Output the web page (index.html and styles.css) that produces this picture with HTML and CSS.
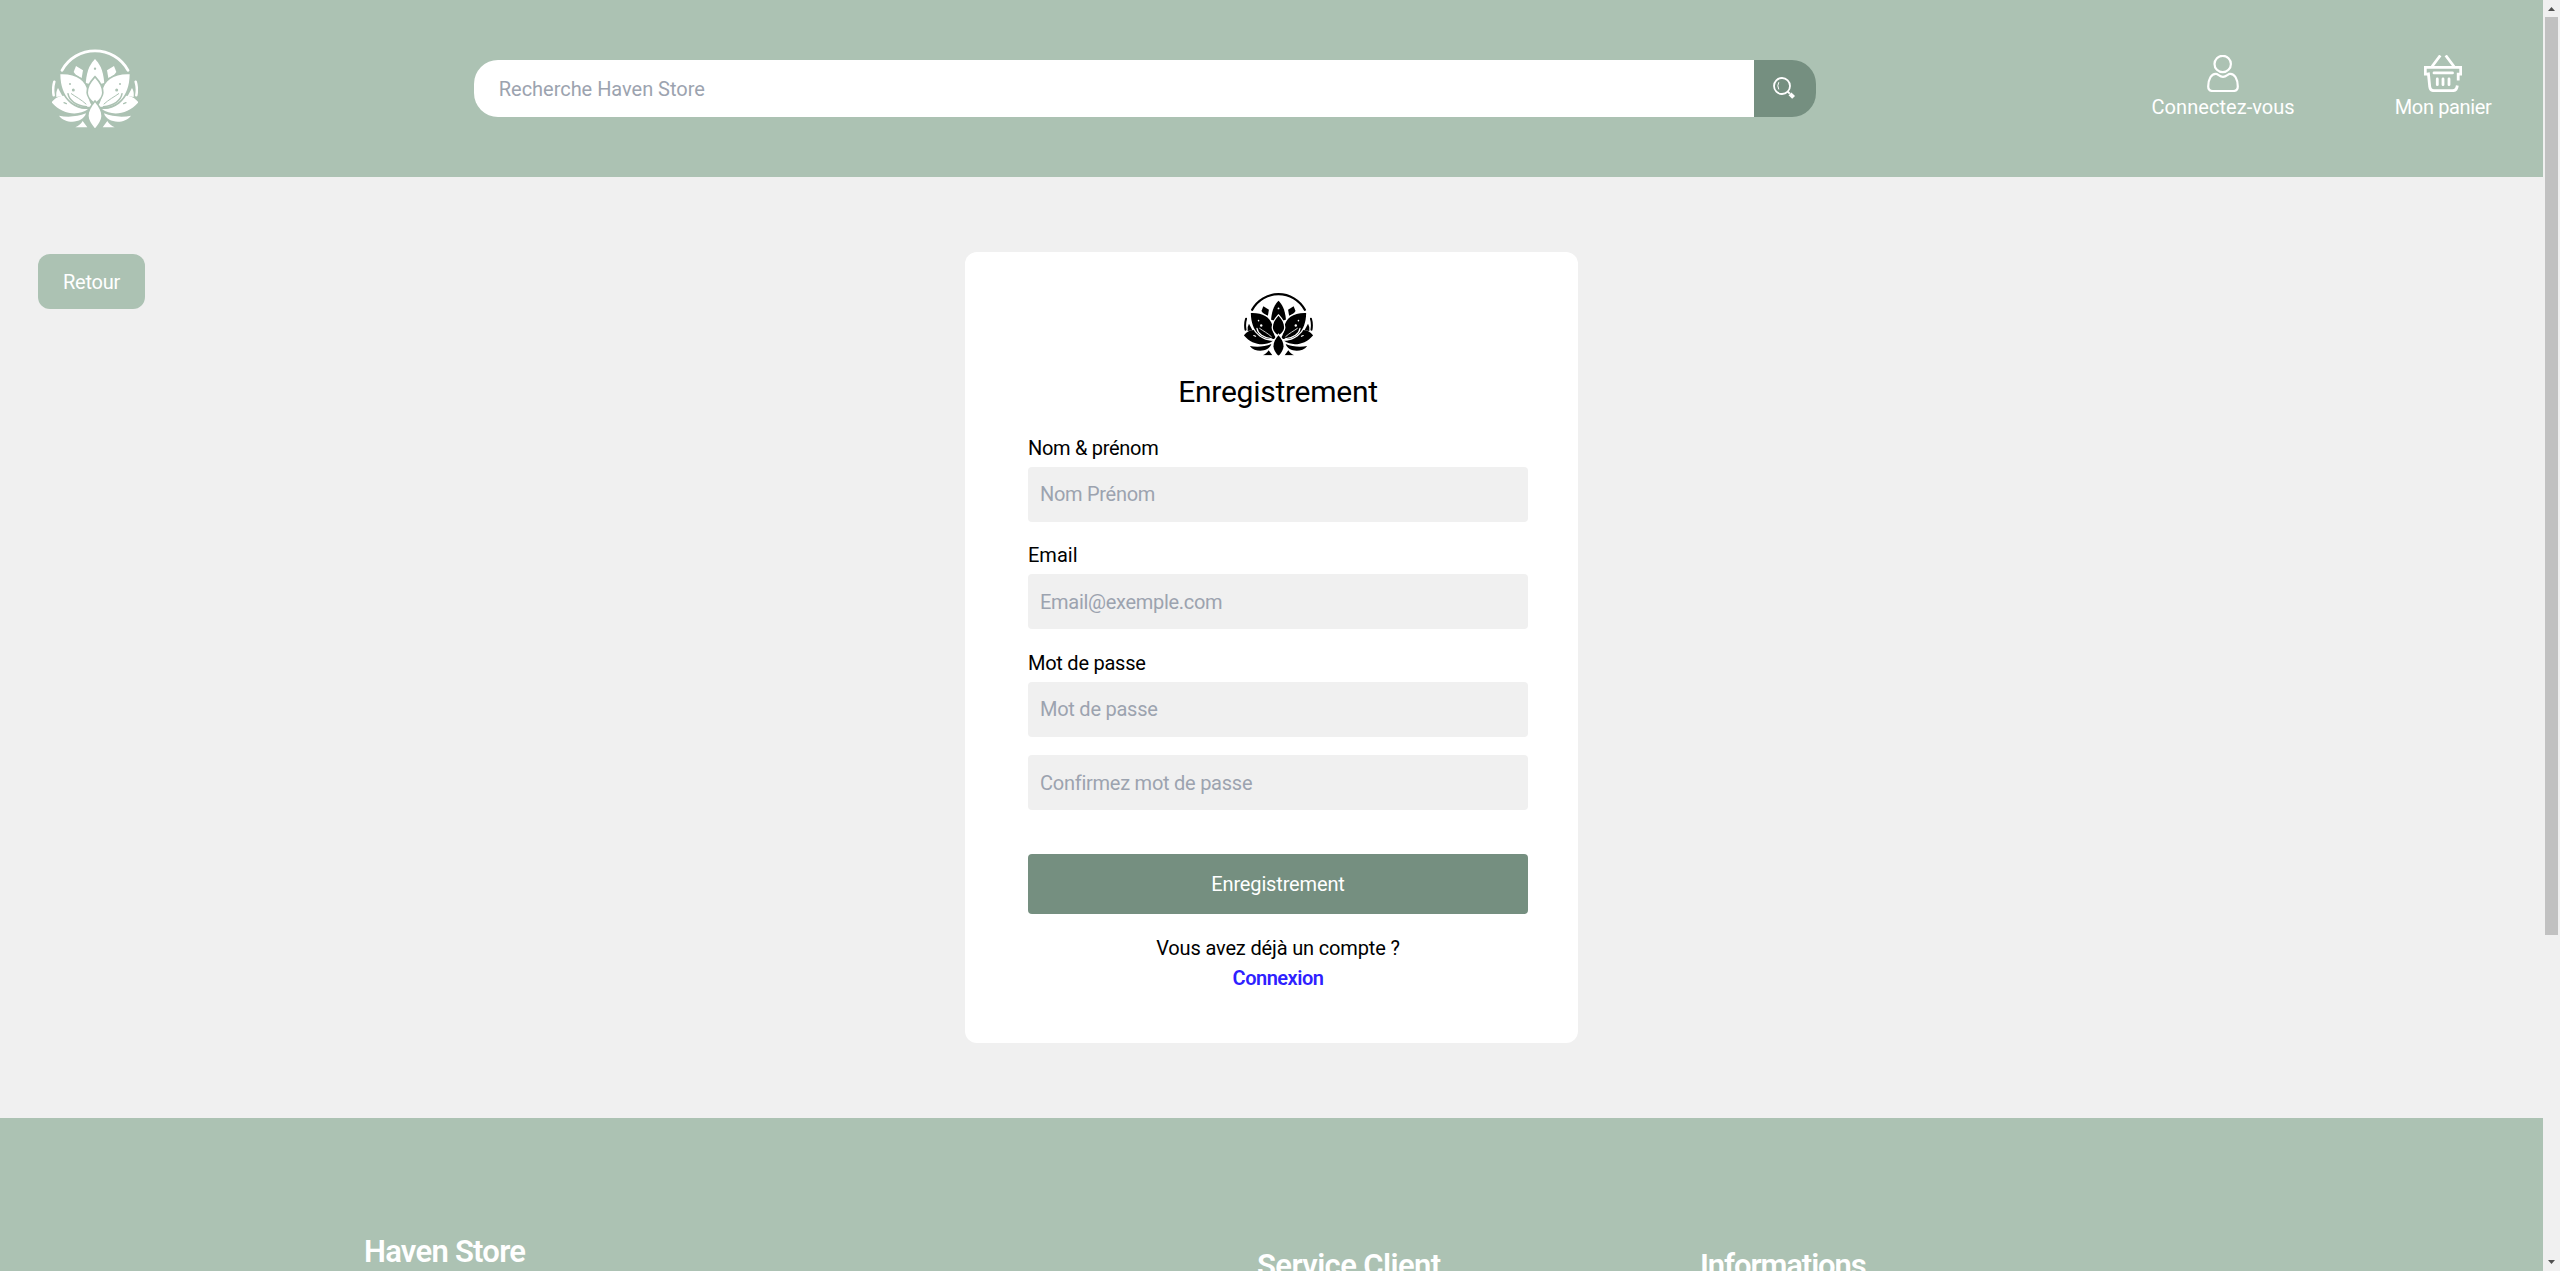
FILE: index.html
```html
<!DOCTYPE html>
<html lang="fr">
<head>
<meta charset="utf-8">
<title>Haven Store</title>
<link rel="stylesheet" href="styles.css">
</head>
<body>
<svg class="defs" width="0" height="0">
  <symbol id="lotus" viewBox="66 57 258 235">
    <path class="line" d="M96 120A113 113 0 0 1 294 120" stroke-width="8.500"/>
    <path d="M195 86C207 99 219 114 223 158L195 165L167 158C171 114 183 99 195 86Z"/>
    <g id="lotus-half">
      <path d="M138 107L159 120L155 143L140 137L131 125Z"/>
      <path class="line" d="M73 154Q67 174 71 195" stroke-width="7.500"/>
      <path d="M84 173L97 197L79 200Q77 184 84 173Z"/>
      <path d="M136 291C147 285 153 281 158 272L172 291Z"/>
      <path d="M87 256C110 261 142 260 168 249C160 278 108 284 87 256Z"/>
      <path d="M65 216C75 201 90 195 112 196C122 221 142 233 174 237C144 258 96 253 65 216Z"/>
      <path class="gap-edge" d="M91 132C138 130 168 150 173 185C174 202 178 216 187 228C150 238 92 218 91 132Z"/>
      <path class="gap-line" d="M114 190C117 210 138 226 170 229" stroke-width="4.500"/>
      <path class="gap-line" d="M124 190C138 200 154 208 168 221" stroke-width="3"/>
      <circle class="gap-fill" cx="130" cy="179" r="4.500"/>
      <circle class="gap-fill" cx="120" cy="161" r="3"/>
      <path class="gap-line" d="M102 217L109 220" stroke-width="4"/>
    </g>
    <use href="#lotus-half" transform="translate(390 0) scale(-1 1)"/>
    <circle class="gap-fill" cx="195" cy="115" r="3.500"/>
    <path class="gap-edge" d="M195 143C209 158 216 172 216 187C215 202 204 210 195 218C186 210 175 202 174 187C174 172 181 158 195 143Z"/>
    <path class="gap-edge" d="M195 216C207 230 214 244 214 257C214 270 205 282 195 294C185 282 176 270 176 257C176 244 183 230 195 216Z"/>
  </symbol>
</svg>
<div class="window">
  <div class="page">
    <header class="header">
      <svg class="logo"><use href="#lotus"/></svg>
      <form class="search">
        <input class="search-input" type="text" placeholder="Recherche Haven Store">
        <button class="search-button" type="button" aria-label="Rechercher">
          <svg width="22" height="22" viewBox="0 0 22 22" fill="none" stroke="#fff">
            <circle cx="9" cy="9" r="8" stroke-width="1.800"/>
            <path d="M5.800 5.200Q3.800 8.800 5.800 12.400" stroke-width="1"/>
            <path d="M14.800 14.600l2 2" stroke-width="2"/>
            <path d="M17 16.800l3.600 3.600" stroke-width="4"/>
          </svg>
        </button>
      </form>
      <nav class="nav">
        <a class="nav-link">
          <svg width="32" height="37" viewBox="0 0 32 37" fill="none" stroke="#fff" stroke-width="2.200">
            <circle cx="15.700" cy="9" r="8.200"/>
            <path d="M9 18.800C4.500 18.500 1.200 24 1.200 31.500Q1.200 36 5.800 36H26.200Q30.800 36 30.800 31.500C30.800 24 27.500 18.500 23 18.800Q21.500 19 20.300 20.200Q16 23.500 11.700 20.200Q10.500 19 9 18.800Z"/>
          </svg>
          <span>Connectez-vous</span>
        </a>
        <a class="nav-link nav-cart">
          <svg width="38" height="37" viewBox="0 0 38 37" fill="none" stroke="#fff" stroke-width="2.800">
            <path d="M1.300 19.200V12.300H36.700V19.200H34.200V25.500M4.300 17.500L5.700 31.500Q6.200 35.700 10 35.700H28.500Q32.800 35.700 33.300 30.500M0 19.200H5"/>
            <path d="M10 17.900H28.500M13.300 24V29.700M19 24V29.700M25 24V29.700" stroke-linecap="round"/>
            <path d="M8 11.500L16.300 0.500M30 11.500L21.700 0.500"/>
          </svg>
          <span>Mon panier</span>
        </a>
      </nav>
    </header>
    <main class="main">
      <div class="side"><button class="back" type="button">Retour</button></div>
      <form class="card">
        <svg class="card-logo"><use href="#lotus"/></svg>
        <h1 class="title">Enregistrement</h1>
        <label class="field name">Nom &amp; prénom
          <input class="input" type="text" placeholder="Nom Prénom">
        </label>
        <label class="field email">Email
          <input class="input" type="email" placeholder="Email@exemple.com">
        </label>
        <label class="field">Mot de passe
          <input class="input" type="password" placeholder="Mot de passe">
        </label>
        <input class="input" type="password" placeholder="Confirmez mot de passe">
        <button class="submit" type="button">Enregistrement</button>
        <p class="hint">Vous avez déjà un compte ?</p>
        <a class="login">Connexion</a>
      </form>
      <div class="side"></div>
    </main>
    <footer class="footer">
      <h2 class="footer-brand">Haven Store</h2>
      <h2 class="footer-service">Service Client</h2>
      <h2 class="footer-info">Informations</h2>
    </footer>
  </div>
  <div class="scrollbar">
    <svg width="7" height="4" viewBox="0 0 7 4"><path d="M0 4L3.500 0L7 4Z" fill="#505050"/></svg>
    <div class="track"><div class="thumb"></div></div>
    <svg width="7" height="4" viewBox="0 0 7 4"><path d="M0 0L3.500 4L7 0Z" fill="#505050"/></svg>
  </div>
</div>
</body>
</html>
```
FILE: styles.css
```css
* { box-sizing: border-box; }
html, body { height: 100%; margin: 0; overflow: hidden; }
body, input, button {
  font-family: Roboto, "Liberation Sans", sans-serif;
  font-size: 20px;
  line-height: 30px;
  letter-spacing: -0.25px;
}
body { background: #f0f0f0; color: #000; }
input, button { border: 0; margin: 0; padding: 0; outline: 0; }
input::placeholder { color: #9ca3af; opacity: 1; }
h1, h2, p { margin: 0; }

/* lotus artwork: petals take the text colour, separations take --gap */
.defs { display: block; height: 0; }
.logo, .card-logo { display: block; fill: currentColor; }
.line { fill: none; stroke: currentColor; stroke-linecap: round; }
.gap-edge { stroke: var(--gap); stroke-width: 10; paint-order: stroke; }
.gap-line { fill: none; stroke: var(--gap); stroke-linecap: round; }
.gap-fill { fill: var(--gap); }

.window { display: flex; height: 1271px; }
.page { flex: 1; display: flex; flex-direction: column; overflow: hidden; }

.header {
  flex: none;
  display: flex;
  align-items: center;
  justify-content: space-between;
  height: 177px;
  padding: 0 51.5px 0 52px;
  background: #acc2b3;
  color: #fff;
}
.logo { width: 86px; height: 79px; --gap: #acc2b3; }
.search { display: flex; width: 1342px; height: 57px; }
.search-input {
  flex: 1;
  padding: 0 25px;
  border-radius: 24px 0 0 24px;
  background: #fff;
  letter-spacing: -0.03px;
}
.search-button {
  display: flex;
  align-items: center;
  justify-content: center;
  width: 62px;
  padding-right: 2px;
  padding-bottom: 2px;
  border-radius: 0 24px 24px 0;
  background: #758f80;
}
.nav { display: flex; gap: 100px; }
.nav-link { display: flex; flex-direction: column; align-items: center; letter-spacing: 0.05px; }
.nav-cart { letter-spacing: -0.35px; }

.main { flex: none; display: flex; align-items: flex-start; height: 941px; padding: 75px 0; }
.side { flex: 1; padding: 2px 38px; }
.back {
  width: 107px;
  height: 55px;
  border-radius: 12px;
  background: #acc2b3;
  color: #fff;
}
.card {
  display: flex;
  flex-direction: column;
  width: 613px;
  height: 791px;
  padding: 41px 50px 50px 63px;
  border-radius: 12px;
  background: #fff;
}
.card-logo { align-self: center; width: 69px; height: 63px; --gap: #fff; }
.title {
  margin: 13px 0 19px;
  font-size: 30px;
  font-weight: 400;
  line-height: 45px;
  text-align: center;
}
.field { display: flex; flex-direction: column; gap: 4px; margin-bottom: 18.5px; }
.name, .name .input { letter-spacing: -0.3px; }
.email { letter-spacing: 0; }
.email .input { letter-spacing: -0.3px; }
.input {
  width: 100%;
  height: 55px;
  flex: none;
  padding: 0 12px;
  border-radius: 4px;
  background: #f0f0f0;
}
.submit {
  flex: none;
  height: 60px;
  margin: 44px 0 19px;
  border-radius: 4px;
  background: #758f80;
  color: #fff;
  letter-spacing: -0.15px;
}
.hint { text-align: center; letter-spacing: -0.15px; }
.login { text-align: center; font-weight: 600; letter-spacing: -0.5px; color: #2f1fff; }

.footer {
  flex: 1;
  display: grid;
  grid-template-columns: 893px 443px 1fr;
  padding: 116px 0 0 364px;
  overflow: hidden;
  background: #acc2b3;
  color: #fff;
}
.footer h2 { font-size: 31px; font-weight: 600; line-height: 36px; letter-spacing: -0.75px; white-space: nowrap; }
.footer .footer-service, .footer .footer-info { padding-top: 14px; }
.footer .footer-service { letter-spacing: -0.6px; }
.footer .footer-info { letter-spacing: -1.1px; }

.scrollbar {
  display: flex;
  flex-direction: column;
  align-items: center;
  width: 17px;
  padding: 7px 0;
  background: #f0f0f0;
}
.track { flex: 1; padding: 6px 0; }
.thumb { width: 13px; height: 918px; background: #c1c1c1; }
```
